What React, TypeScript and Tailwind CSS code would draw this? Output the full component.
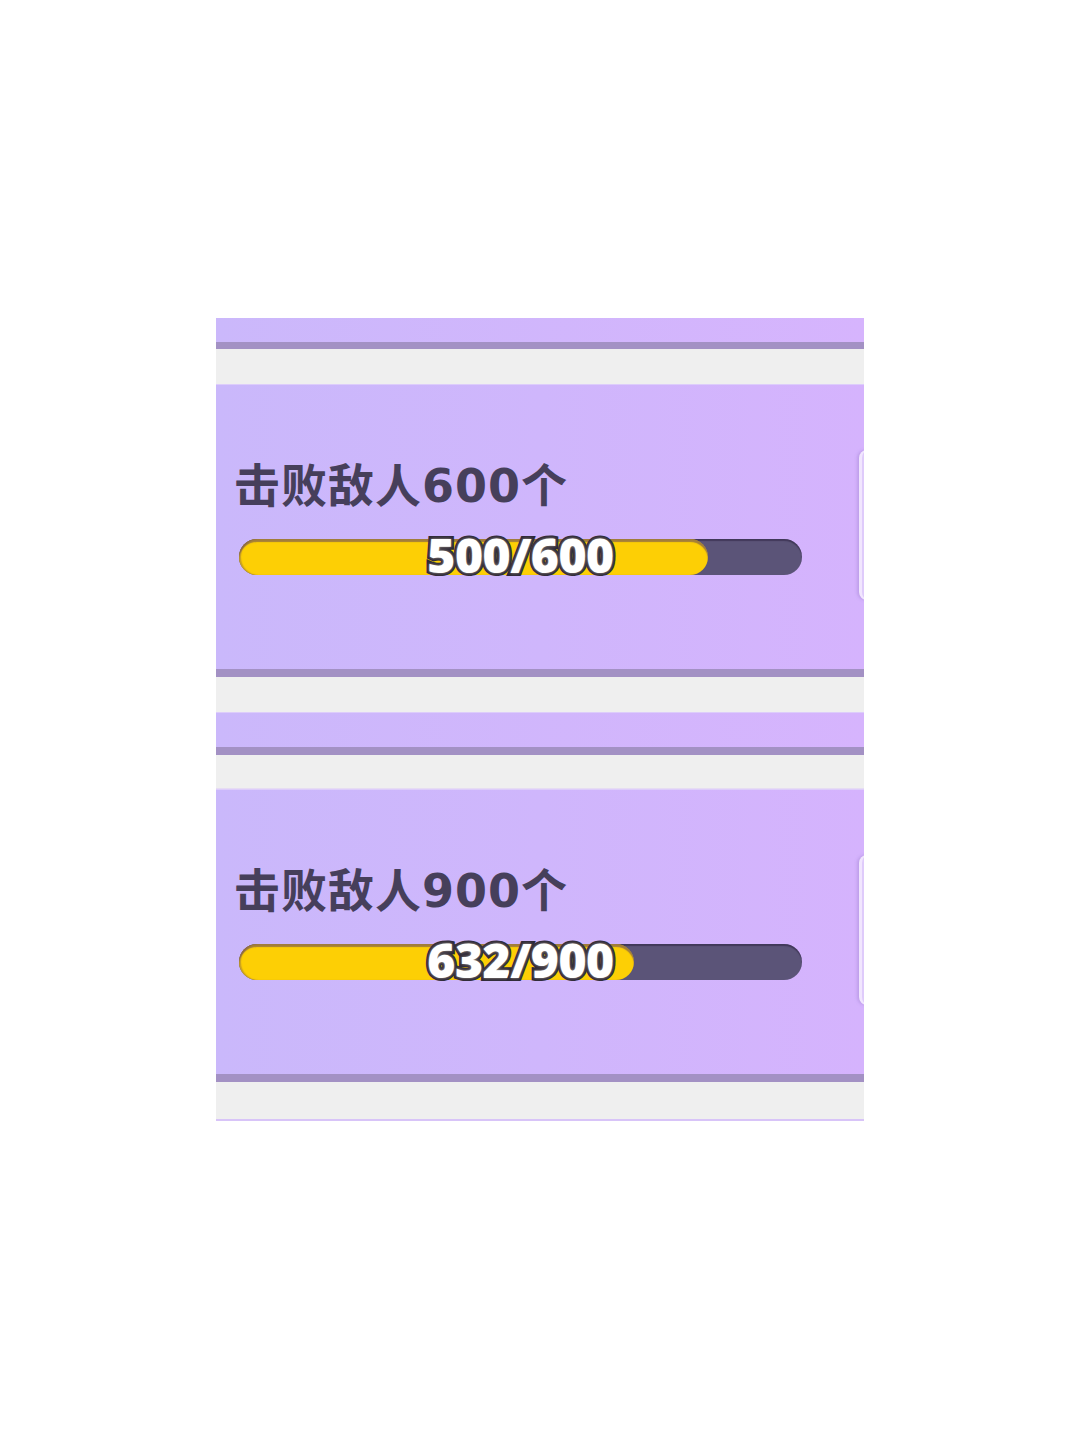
import React from "react";

type Quest = { goal: number; done: number };

const quests: Quest[] = [
  { goal: 600, done: 500 },
  { goal: 900, done: 632 },
];

function Divider({ top, gray }: { top: string; gray: string }) {
  return (
    <div className="flex flex-col">
      <div className={`${top} bg-linear-to-r from-[#cbb8fb] to-[#d6b4fd] border-t border-[#ddcdfb]`} />
      <div className="h-[8px] bg-[#a391c4] shadow-[0_1px_1px_rgba(120,100,160,0.4)]" />
      <div className={`${gray} bg-[#efefef] border-b border-[#e6dcf3]`} />
    </div>
  );
}

function ProgressBar({ done, goal }: Quest) {
  const pct = (done / goal) * 100;
  return (
    <div className="relative ml-[23px] w-[563px] h-[36px] rounded-full bg-[#5b5478] shadow-[inset_0_2px_1px_rgba(40,30,60,0.5)]">
      <div
        className="h-full rounded-full bg-[#fdcf05] shadow-[inset_0_3px_1px_rgba(90,60,100,0.55),inset_2px_0_1px_rgba(90,60,100,0.3)]"
        style={{ width: `${pct}%` }}
      />
      <div className="absolute inset-0 flex items-center justify-center -translate-y-[2px]">
        <span className="font-['Open_Sans',sans-serif] font-extrabold text-[48px] leading-none text-white tracking-[-0.5px] [paint-order:stroke_fill] [-webkit-text-stroke:6px_#2e2938] [text-shadow:0_0_3px_rgba(255,240,200,0.6)]">
          {done}/{goal}
        </span>
      </div>
    </div>
  );
}

function QuestCard({ goal, done }: Quest) {
  return (
    <div className="flex flex-col">
      <div className="h-[285px] flex bg-linear-to-r from-[#cab8fb] via-[#cfb6fc] to-[#d5b3fd] border-t border-[#ddcdfb]">
        <div className="w-[643px] shrink-0 flex flex-col pt-[78px]">
          <div className="pl-[18px] font-['DejaVu_Sans','Noto_Sans_CJK_SC',sans-serif] font-bold text-[46px] leading-none tracking-[1px] text-[#463f5b]">
            击败敌人{goal}个
          </div>
          <div className="mt-[30px]">
            <ProgressBar goal={goal} done={done} />
          </div>
        </div>
        <div className="mt-[65px] h-[150px] w-[80px] shrink-0 rounded-l-[8px] bg-[#dfcbfb] border-l-[3px] border-y border-[#f1e6fe] shadow-[-2px_0_3px_rgba(150,120,200,0.35)]" />
      </div>
      <div className="h-[8px] bg-[#a391c4]" />
    </div>
  );
}

export default function App() {
  return (
    <div className="w-[1080px] h-[1440px] bg-white pt-[318px]">
      <div className="w-[648px] mx-auto overflow-hidden flex flex-col">
        <div className="h-[24px] bg-linear-to-r from-[#cbb8fb] to-[#d6b4fd]" />
        <div className="h-[7px] bg-[#a391c4]" />
        <div className="h-[35px] bg-[#efefef]" />
        <QuestCard {...quests[0]} />
        <div className="h-[35px] bg-[#efefef]" />
        <Divider top="h-[35px]" gray="h-[34px]" />
        <QuestCard {...quests[1]} />
        <div className="h-[37px] bg-[#efefef]" />
        <div className="h-[2px] bg-[#d8c4f8]" />
      </div>
    </div>
  );
}
